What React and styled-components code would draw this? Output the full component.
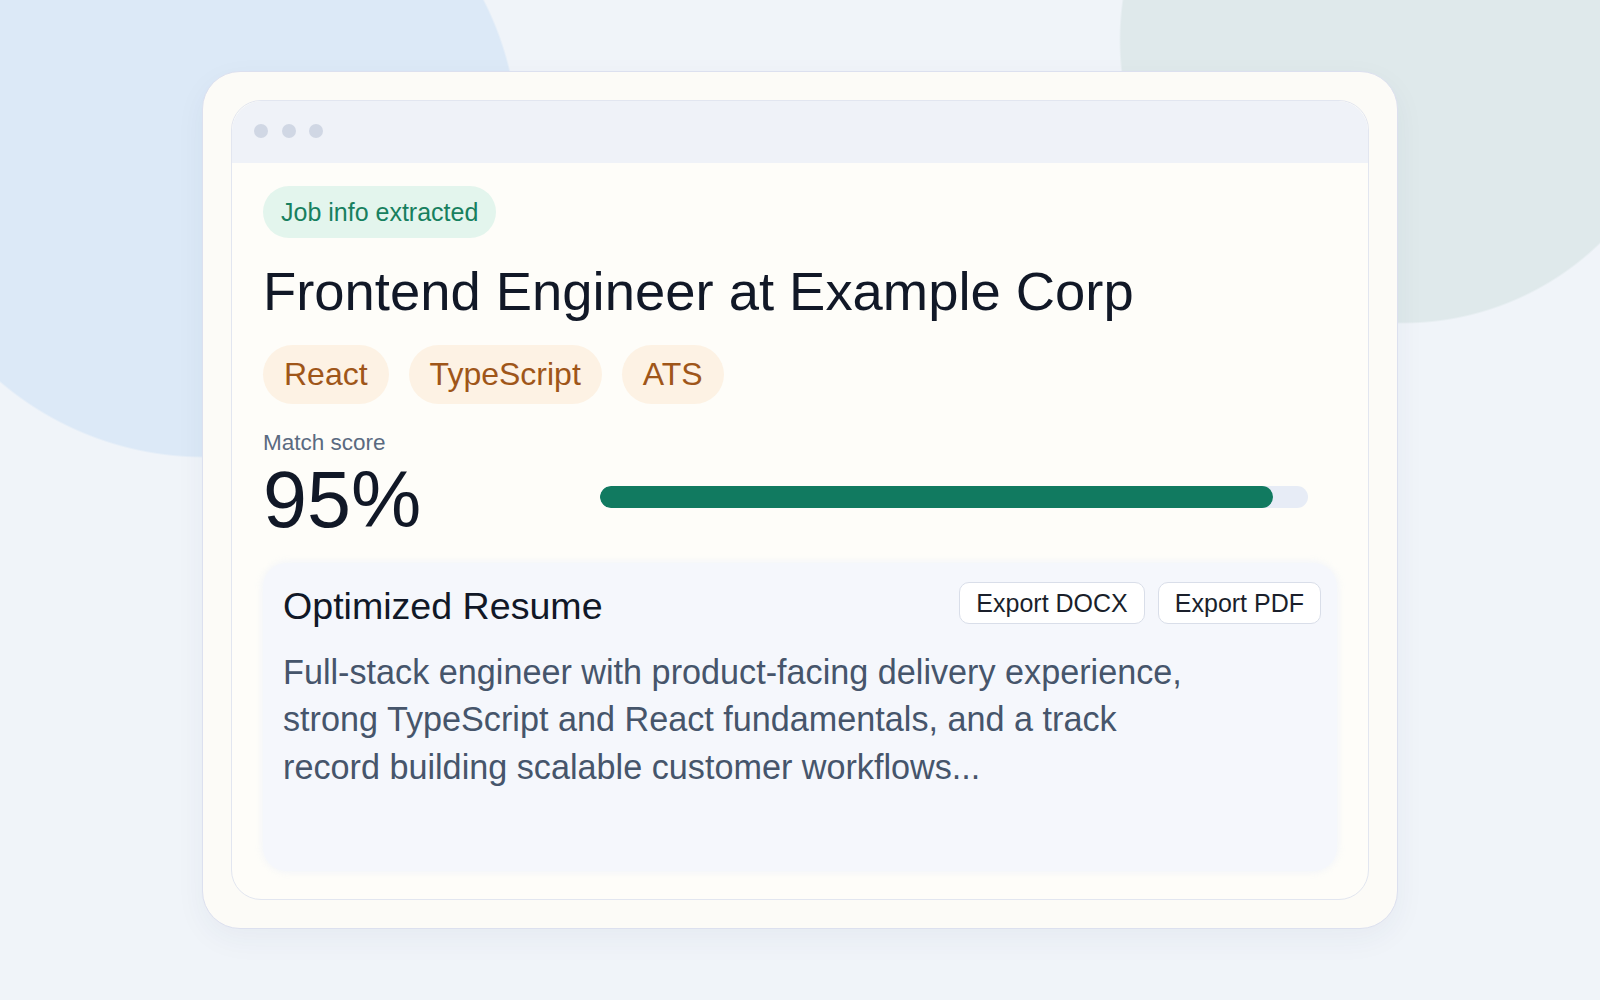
import React from 'react';
import styled, { createGlobalStyle } from 'styled-components';

const GlobalStyle = createGlobalStyle`
  html, body {
    margin: 0;
    padding: 0;
  }

  body {
    font-family: "Liberation Sans", Arial, sans-serif;
    background: #f0f4f9;
  }
`;

const tags = ['React', 'TypeScript', 'ATS'];

const score = 95;

const App = () => (
  <>
    <GlobalStyle />
    <StyledPage>
      <StyledCard>
        <StyledFrame>
          <StyledTitleBar>
            <StyledDot />
            <StyledDot />
            <StyledDot />
          </StyledTitleBar>

          <StyledContent>
            <StyledBadge>Job info extracted</StyledBadge>

            <StyledTitle>Frontend Engineer at Example Corp</StyledTitle>

            <StyledTags>
              {tags.map((t) => (
                <StyledTag key={t}>{t}</StyledTag>
              ))}
            </StyledTags>

            <StyledScoreLabel>Match score</StyledScoreLabel>
            <StyledScoreRow>
              <StyledScore>{score}%</StyledScore>
              <StyledTrack>
                <StyledFill style={{ width: `${score}%` }} />
              </StyledTrack>
            </StyledScoreRow>

            <StyledResume>
              <StyledResumeHeader>
                <StyledResumeTitle>Optimized Resume</StyledResumeTitle>
                <StyledActions>
                  <StyledButton>Export DOCX</StyledButton>
                  <StyledButton>Export PDF</StyledButton>
                </StyledActions>
              </StyledResumeHeader>

              <StyledResumeText>
                Full-stack engineer with product-facing delivery experience,
                strong TypeScript and React fundamentals, and a track record
                building scalable customer workflows...
              </StyledResumeText>
            </StyledResume>
          </StyledContent>
        </StyledFrame>
      </StyledCard>
    </StyledPage>
  </>
);

const StyledPage = styled.div`
  width: 1600px;
  height: 1000px;
  overflow: hidden;
  box-sizing: border-box;
  padding-top: 71px;

  display: flex;
  justify-content: center;
  align-items: flex-start;

  background:
    radial-gradient(circle at 204px 143px, #dce9f7 313px, rgba(220, 233, 247, 0) 315px),
    radial-gradient(circle at 1403px 40px, #dfe9eb 282px, rgba(223, 233, 235, 0) 284px),
    #f0f4f9;
`;

const StyledCard = styled.div`
  width: 1196px;
  box-sizing: border-box;
  padding: 28px;

  background: #fcfbf7;
  border: 1px solid #dce0ef;
  border-radius: 38px;
  box-shadow: 0 10px 30px rgba(40, 60, 100, 0.05);
`;

const StyledFrame = styled.div`
  height: 800px;
  box-sizing: border-box;
  overflow: hidden;

  display: flex;
  flex-direction: column;

  background: #fefdf9;
  border: 1px solid #e2e6f0;
  border-radius: 30px;
`;

const StyledTitleBar = styled.div`
  height: 62px;
  flex-shrink: 0;
  box-sizing: border-box;
  padding: 0 22px;

  display: flex;
  align-items: center;
  gap: 13.5px;

  background: #eff2f8;
  border-radius: 30px 30px 0 0;
`;

const StyledDot = styled.span`
  width: 14px;
  height: 14px;
  margin-top: -2px;
  border-radius: 50%;
  background: #d0d7e4;
`;

const StyledContent = styled.div`
  flex: 1;
  padding: 23px 31px 28px;

  display: flex;
  flex-direction: column;
  align-items: flex-start;
`;

const StyledBadge = styled.span`
  padding: 11px 18px;
  font-size: 25px;
  line-height: 30px;
  color: #17805f;
  background: #e3f5ed;
  border-radius: 26px;
`;

const StyledTitle = styled.h1`
  margin: 21px 0 0;
  font-size: 54.4px;
  font-weight: 400;
  line-height: 65px;
  color: #111827;
`;

const StyledTags = styled.div`
  margin-top: 21px;
  display: flex;
  gap: 20px;
`;

const StyledTag = styled.span`
  padding: 11px 21px;
  font-size: 32px;
  line-height: 37px;
  color: #9f5619;
  background: #fdf2e4;
  border-radius: 30px;
`;

const StyledScoreLabel = styled.div`
  margin-top: 26px;
  font-size: 22.5px;
  line-height: 26px;
  color: #5a6a80;
`;

const StyledScoreRow = styled.div`
  margin-top: 4px;
  display: grid;
  grid-template-columns: 337px 708px;
  align-items: center;
`;

const StyledScore = styled.div`
  font-size: 79px;
  line-height: 79px;
  color: #111827;
`;

const StyledTrack = styled.div`
  height: 22px;
  margin-top: -6px;
  border-radius: 11px;
  background: #e7ecf6;
  overflow: hidden;
`;

const StyledFill = styled.div`
  height: 100%;
  border-radius: 11px;
  background: #117a60;
`;

const StyledResume = styled.section`
  align-self: stretch;
  height: 308px;
  margin-top: 24px;
  box-sizing: border-box;
  padding: 19px 16px 19px 20px;

  background: #f5f7fc;
  border-radius: 24px;
  box-shadow: 0 0 8px rgba(235, 240, 250, 0.8);
`;

const StyledResumeHeader = styled.div`
  display: flex;
  justify-content: space-between;
  align-items: flex-start;
`;

const StyledResumeTitle = styled.h2`
  margin: 2px 0 0;
  font-size: 37.6px;
  font-weight: 400;
  line-height: 44px;
  color: #111827;
`;

const StyledActions = styled.div`
  display: flex;
  gap: 13px;
`;

const StyledButton = styled.button`
  height: 42px;
  padding: 0 16px;

  font-family: inherit;
  font-size: 25px;
  color: #1a1f2b;
  background: #ffffff;
  border: 1px solid #d9dee9;
  border-radius: 10px;
  cursor: pointer;

  &:hover {
    opacity: 0.9;
  }
`;

const StyledResumeText = styled.p`
  max-width: 920px;
  margin: 21px 0 0;
  font-size: 34.2px;
  line-height: 47.4px;
  color: #46556b;
`;

export default App;
